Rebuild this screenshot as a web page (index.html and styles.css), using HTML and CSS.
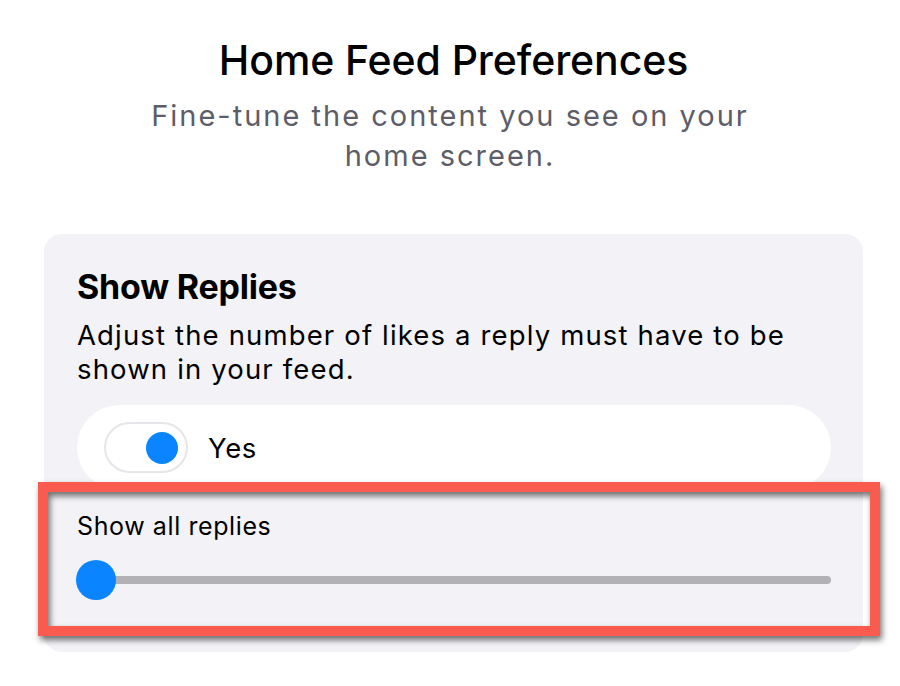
FILE: index.html
```html
<!DOCTYPE html>
<html lang="en">
<head>
<meta charset="utf-8">
<title>Home Feed Preferences</title>
<link rel="stylesheet" href="styles.css">
</head>
<body>
<main class="page">
  <header class="header">
    <h1 class="title">Home Feed Preferences</h1>
    <p class="subtitle">Fine-tune the content you see on your home screen.</p>
  </header>
  <section class="card">
    <h2 class="card-title">Show Replies</h2>
    <p class="card-desc">Adjust the number of likes a reply must have to be shown in your feed.</p>
    <div class="toggle-row">
      <span class="toggle"><span class="knob"></span></span>
      <span class="toggle-label">Yes</span>
    </div>
    <div class="slider-block">
      <div class="slider-label">Show all replies</div>
      <div class="slider">
        <div class="track"></div>
        <div class="thumb"></div>
      </div>
    </div>
    <div class="highlight"></div>
  </section>
</main>
</body>
</html>
```
FILE: styles.css
```css
* { box-sizing: border-box; }
html, body { margin: 0; padding: 0; background: #ffffff; }
body {
  font-family: Inter, "Noto Sans", "Liberation Sans", sans-serif;
  color: #000;
  width: 900px;
  height: 686px;
  overflow: hidden;
}
.page {
  padding-top: 35px;
}
.header {
  display: flex;
  flex-direction: column;
  align-items: center;
  text-align: center;
}
.title {
  margin: 0 0 0 7px;
  font-size: 41px;
  font-weight: 500;
  line-height: 50px;
  letter-spacing: -0.1px;
}
.subtitle {
  margin: 11px 0 0;
  max-width: 640px;
  font-size: 29px;
  line-height: 40px;
  letter-spacing: 2px;
  color: #5d5d68;
  font-weight: 400;
}
.card {
  position: relative;
  margin: 58px 37px 0 44px;
  height: 418px;
  background: #f2f2f7;
  border-radius: 18px;
  padding: 32px 32px 0 33px;
}
.card-title {
  margin: 0;
  font-size: 34px;
  font-weight: 700;
  line-height: 41px;
  letter-spacing: -0.2px;
}
.card-desc {
  margin: 11px 0 0;
  font-size: 27.5px;
  line-height: 34px;
  letter-spacing: 1.15px;
  font-weight: 400;
}
.toggle-row {
  margin-top: 19px;
  height: 85px;
  background: #ffffff;
  border-radius: 43px;
  display: flex;
  align-items: center;
  padding-left: 27px;
  gap: 20px;
}
.toggle {
  width: 84px;
  height: 51px;
  border: 2px solid #e6e6ea;
  border-radius: 26px;
  display: flex;
  align-items: center;
  justify-content: flex-end;
  padding-right: 8px;
  background: #fff;
}
.knob {
  width: 32px;
  height: 32px;
  border-radius: 50%;
  background: #0a84ff;
}
.toggle-label {
  font-size: 27.5px;
  font-weight: 400;
  letter-spacing: 0.6px;
}
.slider-block {
  padding-top: 21px;
}
.slider-label {
  font-size: 25px;
  line-height: 30px;
  letter-spacing: 0.6px;
}
.slider {
  position: relative;
  margin-top: 19px;
  height: 40px;
  display: flex;
  align-items: center;
}
.track {
  flex: 1;
  height: 8px;
  margin-left: 19px;
  border-radius: 4px;
  background: #b1b1b6;
}
.thumb {
  position: absolute;
  left: -1px;
  top: 0;
  width: 40px;
  height: 40px;
  border-radius: 50%;
  background: #0a84ff;
}
.highlight {
  position: absolute;
  left: -6px;
  top: 248px;
  width: 842px;
  height: 154px;
  border: 10px solid #f95b4e;
  filter: drop-shadow(2px 4px 3px rgba(0, 0, 0, 0.55));
  pointer-events: none;
}
```
